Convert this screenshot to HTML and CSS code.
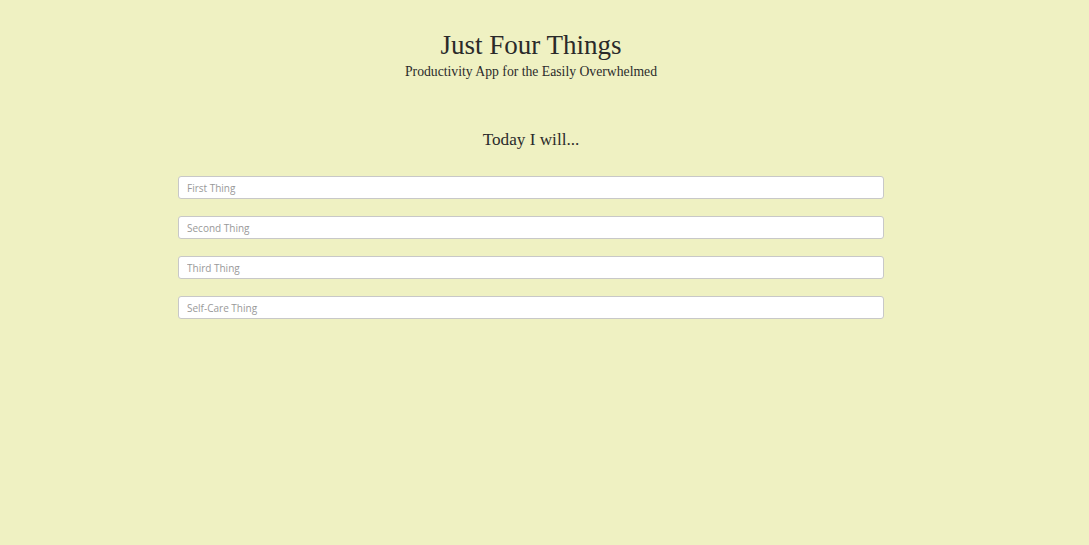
FILE: index.html
```html
<!DOCTYPE html>
<html>
<head>
<meta charset="utf-8">
<link rel="stylesheet" href="styles.css">
</head>
<body>
<div class="page">
  <header class="header">
    <h1 class="title">Just Four Things</h1>
    <p class="subtitle">Productivity App for the Easily Overwhelmed</p>
  </header>
  <main class="main">
    <h2 class="prompt">Today I will...</h2>
    <form class="things">
      <input class="thing" type="text" placeholder="First Thing">
      <input class="thing" type="text" placeholder="Second Thing">
      <input class="thing" type="text" placeholder="Third Thing">
      <input class="thing" type="text" placeholder="Self-Care Thing">
    </form>
  </main>
</div>
</body>
</html>
```
FILE: styles.css
```css
html, body {
  margin: 0;
  padding: 0;
  background: #eff1c2;
  height: 100%;
}
.page {
  width: 1062px;
  display: flex;
  flex-direction: column;
  align-items: center;
  font-family: "Liberation Serif", serif;
  color: #2b2b2b;
}
.header {
  padding-top: 29px;
  text-align: center;
}
.title {
  margin: 0;
  font-weight: normal;
  font-size: 27px;
  line-height: 32px;
  color: #2a2a2a;
}
.subtitle {
  margin: 3px 0 0;
  font-size: 13.7px;
  line-height: 16px;
}
.main {
  display: flex;
  flex-direction: column;
  align-items: center;
  padding-top: 49px;
}
.prompt {
  margin: 0;
  font-weight: normal;
  font-size: 17.2px;
  line-height: 22px;
}
.things {
  display: flex;
  flex-direction: column;
  gap: 17px;
  margin-top: 25px;
}
.thing {
  box-sizing: border-box;
  width: 706px;
  height: 23px;
  margin: 0;
  padding: 0 8px;
  border: 1px solid #c8c8c8;
  border-radius: 3px;
  background: #fff;
  font-family: "Open Sans", sans-serif;
  font-size: 10px;
}
.thing::placeholder {
  color: #999;
}
```
